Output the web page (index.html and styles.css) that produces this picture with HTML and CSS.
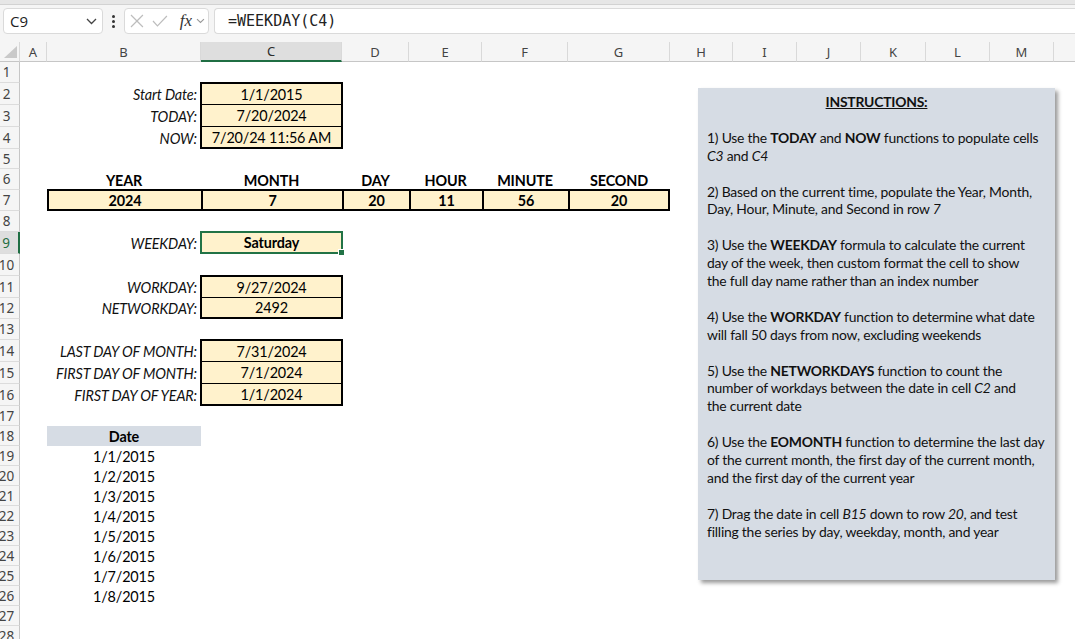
FILE: index.html
```html
<!DOCTYPE html>
<html lang="en">
<head>
    <meta charset="UTF-8">
    <meta name="viewport" content="width=device-width, initial-scale=1.0">
    <title>Date Functions</title>
    <link rel="stylesheet" href="styles.css">
</head>
<body>
    <div class="topstrip"></div>

    <div class="toolbar">
        <div class="namebox">
            <span>C9</span>
            <svg class="chev" width="11" height="7" viewBox="0 0 11 7"><polyline points="1,1 5.5,5.5 10,1" /></svg>
        </div>
        <div class="dots"><i></i><i></i><i></i></div>
        <div class="fxbox">
            <svg class="ico" width="14" height="14" viewBox="0 0 14 14"><line x1="1" y1="1" x2="13" y2="13" /><line x1="13" y1="1" x2="1" y2="13" /></svg>
            <svg class="ico" width="16" height="12" viewBox="0 0 16 12"><polyline points="1,6 5.5,11 15,1" /></svg>
            <span class="fx">fx</span>
            <svg class="chev small" width="9" height="6" viewBox="0 0 9 6"><polyline points="1,1 4.5,4.5 8,1" /></svg>
        </div>
        <div class="formula">=WEEKDAY(C4)</div>
    </div>

    <div class="sheet">
        <!-- column headers -->
        <div class="colhead corner">
            <svg width="13" height="12" viewBox="0 0 13 12"><polygon points="13,0 13,12 0,12" /></svg>
        </div>
        <div class="colhead">A</div>
        <div class="colhead">B</div>
        <div class="colhead active">C</div>
        <div class="colhead">D</div>
        <div class="colhead">E</div>
        <div class="colhead">F</div>
        <div class="colhead">G</div>
        <div class="colhead">H</div>
        <div class="colhead">I</div>
        <div class="colhead">J</div>
        <div class="colhead">K</div>
        <div class="colhead">L</div>
        <div class="colhead">M</div>
        <div class="colhead last"></div>

        <!-- row numbers -->
        <div class="rowhead">1</div>
        <div class="rowhead">2</div>
        <div class="rowhead">3</div>
        <div class="rowhead">4</div>
        <div class="rowhead">5</div>
        <div class="rowhead">6</div>
        <div class="rowhead">7</div>
        <div class="rowhead">8</div>
        <div class="rowhead active">9</div>
        <div class="rowhead">10</div>
        <div class="rowhead">11</div>
        <div class="rowhead">12</div>
        <div class="rowhead">13</div>
        <div class="rowhead">14</div>
        <div class="rowhead">15</div>
        <div class="rowhead">16</div>
        <div class="rowhead">17</div>
        <div class="rowhead">18</div>
        <div class="rowhead">19</div>
        <div class="rowhead">20</div>
        <div class="rowhead">21</div>
        <div class="rowhead">22</div>
        <div class="rowhead">23</div>
        <div class="rowhead">24</div>
        <div class="rowhead">25</div>
        <div class="rowhead">26</div>
        <div class="rowhead">27</div>
        <div class="rowhead">28</div>

        <!-- dates -->
        <div class="cell label r2 cb">Start Date:</div>
        <div class="cell input top r2 cc">1/1/2015</div>
        <div class="cell label r3 cb">TODAY:</div>
        <div class="cell input mid r3 cc">7/20/2024</div>
        <div class="cell label r4 cb">NOW:</div>
        <div class="cell input bottom r4 cc">7/20/24 11:56 AM</div>

        <!-- date parts -->
        <div class="cell heading r6 cb">YEAR</div>
        <div class="cell heading r6 cc">MONTH</div>
        <div class="cell heading r6 cd">DAY</div>
        <div class="cell heading r6 ce">HOUR</div>
        <div class="cell heading r6 cf">MINUTE</div>
        <div class="cell heading r6 cg">SECOND</div>
        <div class="cell part r7 cb">2024</div>
        <div class="cell part r7 cc">7</div>
        <div class="cell part r7 cd">20</div>
        <div class="cell part r7 ce">11</div>
        <div class="cell part r7 cf">56</div>
        <div class="cell part end r7 cg">20</div>

        <div class="cell label r9 cb">WEEKDAY:</div>
        <div class="cell selected r9 cc">Saturday<span class="handle"></span></div>

        <div class="cell label r11 cb">WORKDAY:</div>
        <div class="cell input top r11 cc">9/27/2024</div>
        <div class="cell label r12 cb">NETWORKDAY:</div>
        <div class="cell input bottom r12 cc">2492</div>

        <div class="cell label r14 cb">LAST DAY OF MONTH:</div>
        <div class="cell input top r14 cc">7/31/2024</div>
        <div class="cell label r15 cb">FIRST DAY OF MONTH:</div>
        <div class="cell input mid r15 cc">7/1/2024</div>
        <div class="cell label r16 cb">FIRST DAY OF YEAR:</div>
        <div class="cell input bottom r16 cc">1/1/2024</div>

        <!-- fill series -->
        <div class="cell tablehead r18 cb">Date</div>
        <div class="cell r19 cb">1/1/2015</div>
        <div class="cell r20 cb">1/2/2015</div>
        <div class="cell r21 cb">1/3/2015</div>
        <div class="cell r22 cb">1/4/2015</div>
        <div class="cell r23 cb">1/5/2015</div>
        <div class="cell r24 cb">1/6/2015</div>
        <div class="cell r25 cb">1/7/2015</div>
        <div class="cell r26 cb">1/8/2015</div>

        <!-- floating text box -->
        <div class="instructions">
            <h3>INSTRUCTIONS:</h3>
            <p>1) Use the <b>TODAY</b> and <b>NOW</b> functions to populate cells<br><i>C3</i> and <i>C4</i></p>
            <p>2) Based on the current time, populate the Year, Month,<br>Day, Hour, Minute, and Second in row <i>7</i></p>
            <p>3) Use the <b>WEEKDAY</b> formula to calculate the current<br>day of the week, then custom format the cell to show<br>the full day name rather than an index number</p>
            <p>4) Use the <b>WORKDAY</b> function to determine what date<br>will fall 50 days from now, excluding weekends</p>
            <p>5) Use the <b>NETWORKDAYS</b> function to count the<br>number of workdays between the date in cell <i>C2</i> and<br>the current date</p>
            <p>6) Use the <b>EOMONTH</b> function to determine the last day<br>of the current month, the first day of the current month,<br>and the first day of the current year</p>
            <p>7) Drag the date in cell <i>B15</i> down to row <i>20</i>, and test<br>filling the series by day, weekday, month, and year</p>
        </div>
    </div>
</body>
</html>
```

FILE: styles.css
```css
body {
    margin: 0;
    width: 1075px;
    height: 639px;
    overflow: hidden;
    background-color: #fff;
    font-family: "Lato", "Open Sans", sans-serif;
    color: #000;
}

/* formula bar */

.topstrip {
    height: 4px;
    background-color: #e6e6e6;
    border-bottom: 1px solid #d2d2d2;
}

.toolbar {
    height: 37px;
    box-sizing: border-box;
    padding: 3px 0 0 3px;
    display: flex;
    align-items: flex-start;
    background-color: #f5f5f5;
}

.namebox,
.fxbox,
.formula {
    height: 26px;
    box-sizing: border-box;
    background-color: #fff;
    border: 1px solid #dadada;
    border-radius: 4px;
    display: flex;
    align-items: center;
}

.namebox {
    width: 100px;
    padding: 0 5px 0 6px;
    justify-content: space-between;
    font-family: "Open Sans", sans-serif;
    font-size: 15px;
    color: #222;
}

.chev {
    fill: none;
    stroke: #444;
    stroke-width: 1.3;
}

.chev.small {
    stroke: #999;
    stroke-width: 1.1;
}

.dots {
    width: 21px;
    height: 26px;
    display: flex;
    flex-direction: column;
    align-items: center;
    justify-content: center;
    gap: 2px;
}

.dots i {
    width: 3px;
    height: 3px;
    border-radius: 50%;
    background-color: #333;
}

.fxbox {
    width: 85px;
    padding: 0 3px 0 5px;
    gap: 8px;
}

.ico {
    fill: none;
    stroke: #bdbdbd;
    stroke-width: 1.2;
}

.fx {
    font-family: "Liberation Serif", serif;
    font-style: italic;
    font-size: 17px;
    color: #333;
    margin-left: 4px;
    margin-right: -4px;
}

.formula {
    flex: 1;
    margin-left: 5px;
    padding-left: 13px;
    border-right: none;
    border-radius: 4px 0 0 4px;
    font-family: "DejaVu Sans Mono", monospace;
    font-size: 15px;
    color: #222;
}

/* grid */

.sheet {
    position: relative;
    display: grid;
    grid-template-columns: 20px 27px 154px 141px 67px 73px 86px 102px 63px 64px 64px 65px 64px 64px 1fr;
    grid-template-rows: 20px 21px 22px 22px 22px 20px 21px 21px 21px 22px 22px 22px 21px 21px 22px 22px 22px 20px repeat(11, 20px);
}

.colhead {
    grid-row: 1;
    background-color: #f5f5f5;
    border-right: 1px solid #d9d9d9;
    border-bottom: 1px solid #c6c6c6;
    box-sizing: border-box;
    display: flex;
    align-items: center;
    justify-content: center;
    font-family: "Noto Sans", sans-serif;
    font-size: 13px;
    color: #444;
}

.colhead.corner {
    justify-content: flex-end;
    align-items: flex-end;
    padding: 0 2px 3px 0;
    fill: #c9c9c9;
}

.colhead.active {
    background-color: #dedede;
    border-bottom: 2px solid #1f6e43;
    color: #2b2b2b;
}

.colhead.last {
    border-right: none;
}

.rowhead {
    grid-column: 1;
    background-color: #f5f5f5;
    border-right: 1px solid #c6c6c6;
    border-bottom: 1px solid #dcdcdc;
    box-sizing: border-box;
    padding-right: 6px;
    display: flex;
    align-items: center;
    justify-content: center;
    font-family: "Noto Sans", sans-serif;
    font-size: 13.5px;
    color: #444;
}

.rowhead.active {
    background-color: #dedede;
    border-right: 2px solid #1f6e43;
    color: #1f6e43;
}

/* cells */

.r2 { grid-row: 3; }
.r3 { grid-row: 4; }
.r4 { grid-row: 5; }
.r6 { grid-row: 7; }
.r7 { grid-row: 8; }
.r9 { grid-row: 10; }
.r11 { grid-row: 12; }
.r12 { grid-row: 13; }
.r14 { grid-row: 15; }
.r15 { grid-row: 16; }
.r16 { grid-row: 17; }
.r18 { grid-row: 19; }
.r19 { grid-row: 20; }
.r20 { grid-row: 21; }
.r21 { grid-row: 22; }
.r22 { grid-row: 23; }
.r23 { grid-row: 24; }
.r24 { grid-row: 25; }
.r25 { grid-row: 26; }
.r26 { grid-row: 27; }

.cb { grid-column: 3; }
.cc { grid-column: 4; }
.cd { grid-column: 5; }
.ce { grid-column: 6; }
.cf { grid-column: 7; }
.cg { grid-column: 8; }

.cell {
    box-sizing: border-box;
    display: flex;
    align-items: center;
    justify-content: center;
    font-size: 14.4px;
    letter-spacing: -0.15px;
    white-space: nowrap;
}

.cell.label {
    justify-content: flex-end;
    padding-right: 4px;
    font-style: italic;
    color: #111;
}

.cell.input {
    background-color: #fff2cc;
    border-left: 2px solid #000;
    border-right: 2px solid #000;
    border-bottom: 1px solid #000;
    margin-left: -1px;
    margin-right: -1px;
}

.cell.input.top {
    border-top: 2px solid #000;
    margin-top: -1px;
}

.cell.input.bottom {
    border-bottom: 2px solid #000;
}

.cell.heading {
    font-weight: bold;
    padding-top: 1px;
}

.cell.part {
    background-color: #fff2cc;
    border-top: 2px solid #000;
    border-bottom: 2px solid #000;
    border-left: 2px solid #000;
    margin-top: -1px;
    font-weight: bold;
}

.cell.part.end {
    border-right: 2px solid #000;
}

.cell.selected {
    position: relative;
    background-color: #fff2cc;
    border: 2px solid #217346;
    margin: -1px -1px 0 -1px;
    font-weight: bold;
}

.handle {
    position: absolute;
    right: -4px;
    bottom: -4px;
    width: 5px;
    height: 5px;
    background-color: #217346;
    border: 1px solid #fff;
}

.cell.tablehead {
    background-color: #d6dce4;
    font-weight: bold;
}

/* text box shape */

.instructions {
    position: absolute;
    left: 698px;
    top: 46px;
    width: 357px;
    height: 492px;
    box-sizing: border-box;
    padding: 5px 0 0 9px;
    background-color: #d6dce4;
    box-shadow: 3px 3px 4px rgba(0, 0, 0, 0.4);
    font-size: 13.9px;
    letter-spacing: -0.22px;
    line-height: 17.9px;
    color: #111;
    white-space: nowrap;
}

.instructions h3 {
    margin: 0 0 17.9px -9px;
    font-size: 13.9px;
    font-weight: bold;
    text-align: center;
    text-decoration: underline;
}

.instructions p {
    margin: 0 0 17.9px;
}
```
